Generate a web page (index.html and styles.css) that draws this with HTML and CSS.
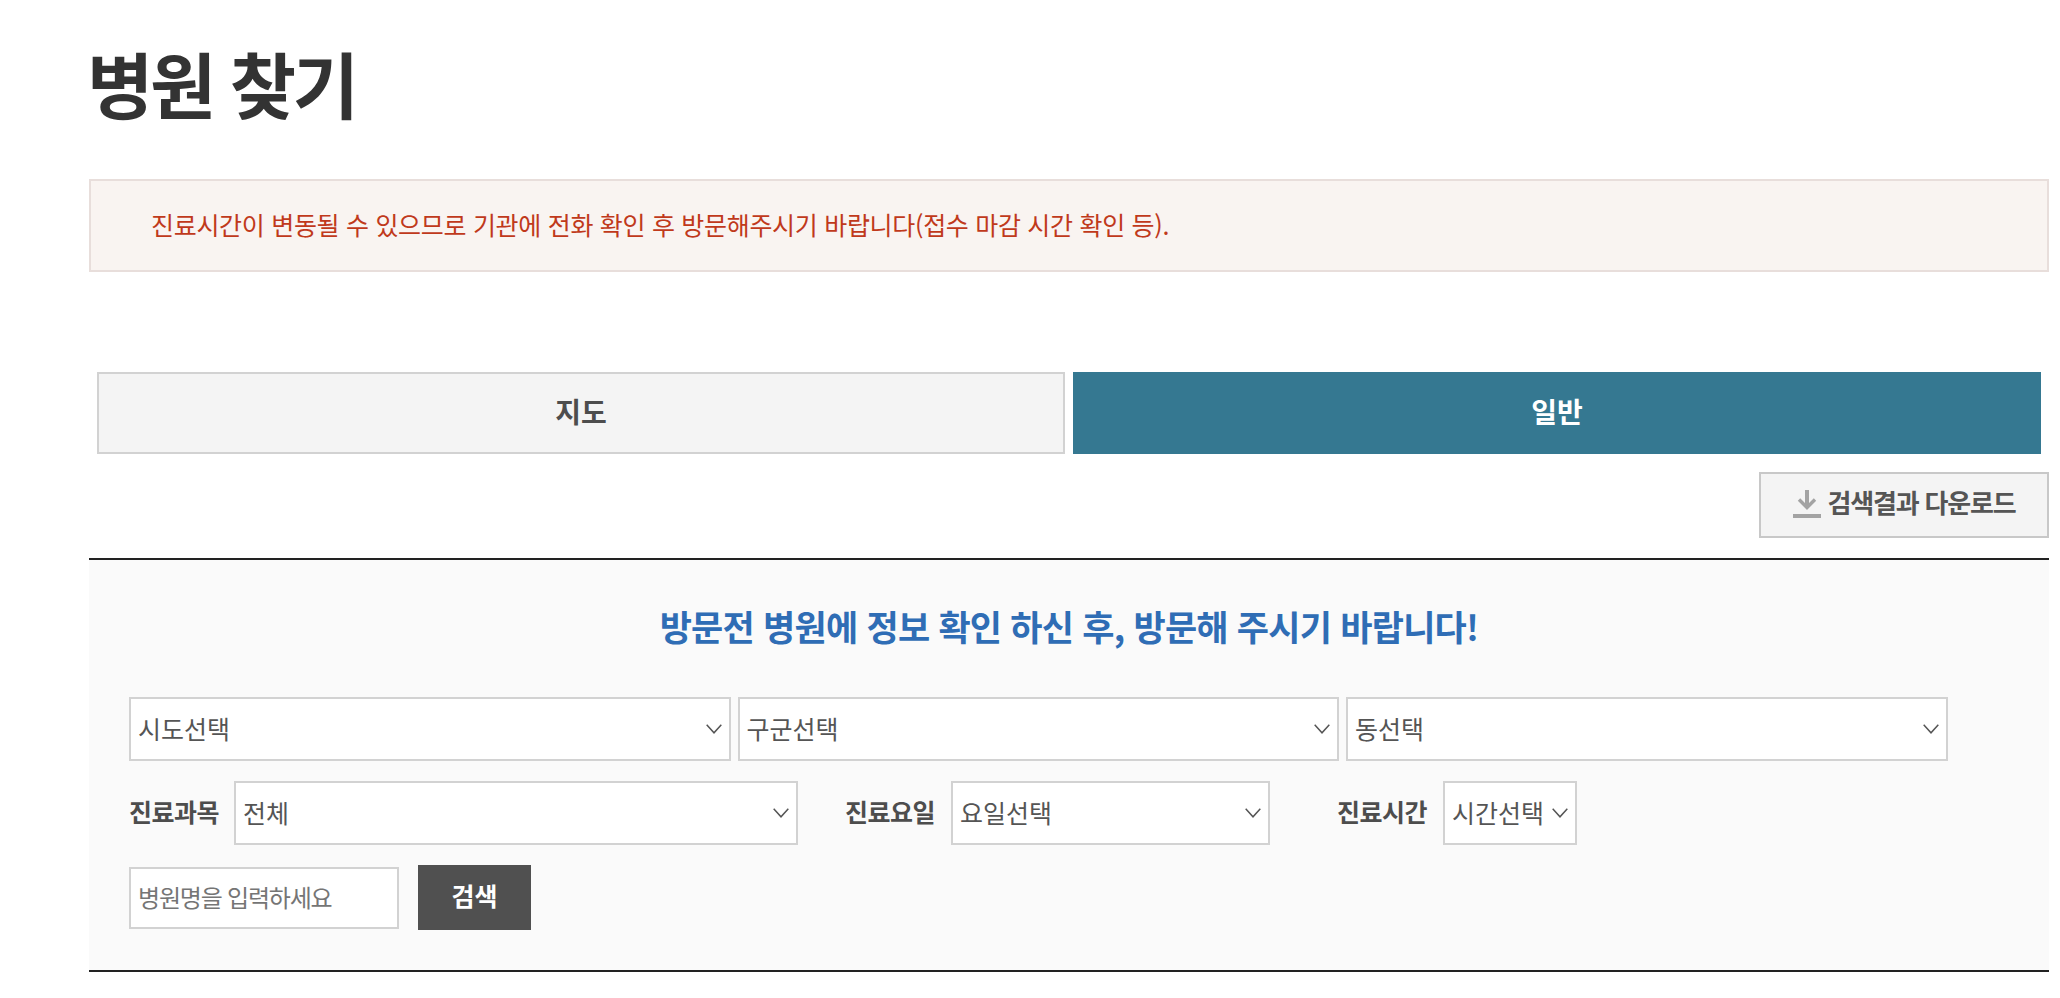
FILE: index.html
```html
<!DOCTYPE html>
<html lang="ko">
<head>
<meta charset="utf-8">
<title>병원 찾기</title>
<link rel="stylesheet" href="styles.css">
</head>
<body>
<main class="page">
  <h1 class="title">병원 찾기</h1>
  <p class="notice">진료시간이 변동될 수 있으므로 기관에 전화 확인 후 방문해주시기 바랍니다(접수 마감 시간 확인 등).</p>
  <div class="tabs">
    <a class="tab">지도</a>
    <a class="tab tab-active">일반</a>
  </div>
  <div class="actions">
    <button class="download" type="button">
      <svg class="download-icon" width="28" height="28" viewBox="0 0 28 28" aria-hidden="true">
        <path d="M14 0v15" stroke="#a3a3a3" stroke-width="4" fill="none"/>
        <path d="M6 9.5l8 8 8-8" stroke="#a3a3a3" stroke-width="3.4" fill="none"/>
        <rect x="0" y="24" width="28" height="4" fill="#a3a3a3"/>
      </svg>
      <span class="download-text">검색결과 다운로드</span>
    </button>
  </div>
  <section class="panel">
    <h2 class="panel-title">방문전 병원에 정보 확인 하신 후, 방문해 주시기 바랍니다!</h2>
    <div class="row">
      <select class="sel sel-area"><option>시도선택</option></select>
      <select class="sel sel-area"><option>구군선택</option></select>
      <select class="sel sel-area"><option>동선택</option></select>
    </div>
    <div class="row row-filters">
      <label class="lbl">진료과목</label>
      <select class="sel sel-dept"><option>전체</option></select>
      <label class="lbl lbl-day">진료요일</label>
      <select class="sel sel-day"><option>요일선택</option></select>
      <label class="lbl lbl-time">진료시간</label>
      <select class="sel sel-time"><option>시간선택</option></select>
    </div>
    <div class="row row-search">
      <input class="name" type="text" placeholder="병원명을 입력하세요">
      <button class="search" type="button">검색</button>
    </div>
  </section>
</main>
</body>
</html>
```

FILE: styles.css
```css
* { box-sizing: border-box; }
html, body { margin: 0; padding: 0; background: #fff; }
body {
  font-family: "Noto Sans CJK KR", "Noto Sans", sans-serif;
  color: #333;
  overflow: hidden;
}
.page {
  width: 1960px;
  margin-left: 89px;
  padding-top: 32px;
}
.title {
  margin: 0;
  font-size: 72px;
  line-height: 100px;
  font-weight: 700;
  letter-spacing: -3.3px;
  text-indent: -2px;
  color: #333;
}
.notice {
  margin: 47px 0 0;
  height: 93px;
  padding-left: 60px;
  border: 2px solid #e8dedb;
  background: #f9f4f1;
  color: #c0391b;
  font-size: 25px;
  line-height: 87px;
  letter-spacing: -0.3px;
}
.tabs {
  display: flex;
  gap: 8px;
  margin: 100px 8px 0;
}
.tab {
  flex: 1;
  height: 82px;
  display: flex;
  align-items: center;
  justify-content: center;
  padding-bottom: 5px;
  border: 2px solid #d2d2d2;
  background: #f4f4f4;
  color: #4d4d4d;
  font-size: 28px;
  font-weight: 700;
}
.tab-active {
  border-color: #357891;
  background: #357891;
  color: #fff;
}
.actions {
  display: flex;
  justify-content: flex-end;
  margin-top: 18px;
}
.download {
  display: flex;
  align-items: center;
  justify-content: center;
  gap: 7px;
  width: 290px;
  height: 66px;
  padding: 0;
  border: 2px solid #c8c8c8;
  background: #f4f4f4;
  color: #555;
  font: 700 26px "Noto Sans CJK KR", sans-serif;
  letter-spacing: -1.2px;
}
.download-text { padding-bottom: 8px; }
.download-icon { margin-top: -3px; }
.panel {
  margin-top: 20px;
  height: 414px;
  padding: 0 40px;
  border-top: 2px solid #222;
  border-bottom: 2px solid #222;
  background: #fafafa;
}
.panel-title {
  margin: 0;
  padding-top: 42px;
  height: 137px;
  text-align: center;
  font-size: 35px;
  line-height: 48px;
  font-weight: 700;
  letter-spacing: -0.75px;
  color: #2f6db5;
}
.row {
  display: flex;
  align-items: center;
  gap: 7px;
}
.row-filters { margin-top: 20px; gap: 0; }
.row-search { margin-top: 20px; gap: 19px; }
.sel {
  appearance: none;
  height: 64px;
  padding: 0 24px 3px 7px;
  border: 2px solid #d2d2d2;
  border-radius: 0;
  background: #fff url("data:image/svg+xml;utf8,<svg xmlns='http://www.w3.org/2000/svg' width='16' height='10' viewBox='0 0 16 10'><path d='M0.7 0.7L8 8.8L15.3 0.7' fill='none' stroke='%23555' stroke-width='1.5'/></svg>") no-repeat right 7px center;
  color: #555;
  font: 400 25px "Noto Sans CJK KR", sans-serif;
}
.sel-area { width: 601.5px; }
.sel-dept { width: 564px; margin-left: 16px; }
.sel-day { width: 319px; margin-left: 17px; }
.sel-time { width: 134px; margin-left: 17px; }
.lbl {
  width: 89px;
  padding-bottom: 4px;
  white-space: nowrap;
  color: #4d4d4d;
  font-size: 25px;
  font-weight: 700;
  letter-spacing: -0.5px;
}
.lbl-day { margin-left: 47px; }
.lbl-time { margin-left: 67px; }
.name {
  width: 270px;
  height: 62px;
  padding: 0 7px 2px;
  border: 2px solid #d2d2d2;
  background: #fff;
  color: #555;
  font: 400 24px "Noto Sans CJK KR", sans-serif;
  letter-spacing: -1.2px;
}
.name::placeholder { color: #757575; opacity: 1; }
.search {
  width: 113px;
  height: 65px;
  padding: 0 0 6px;
  border: 0;
  background: #505050;
  color: #fff;
  font: 700 25px "Noto Sans CJK KR", sans-serif;
}
```
